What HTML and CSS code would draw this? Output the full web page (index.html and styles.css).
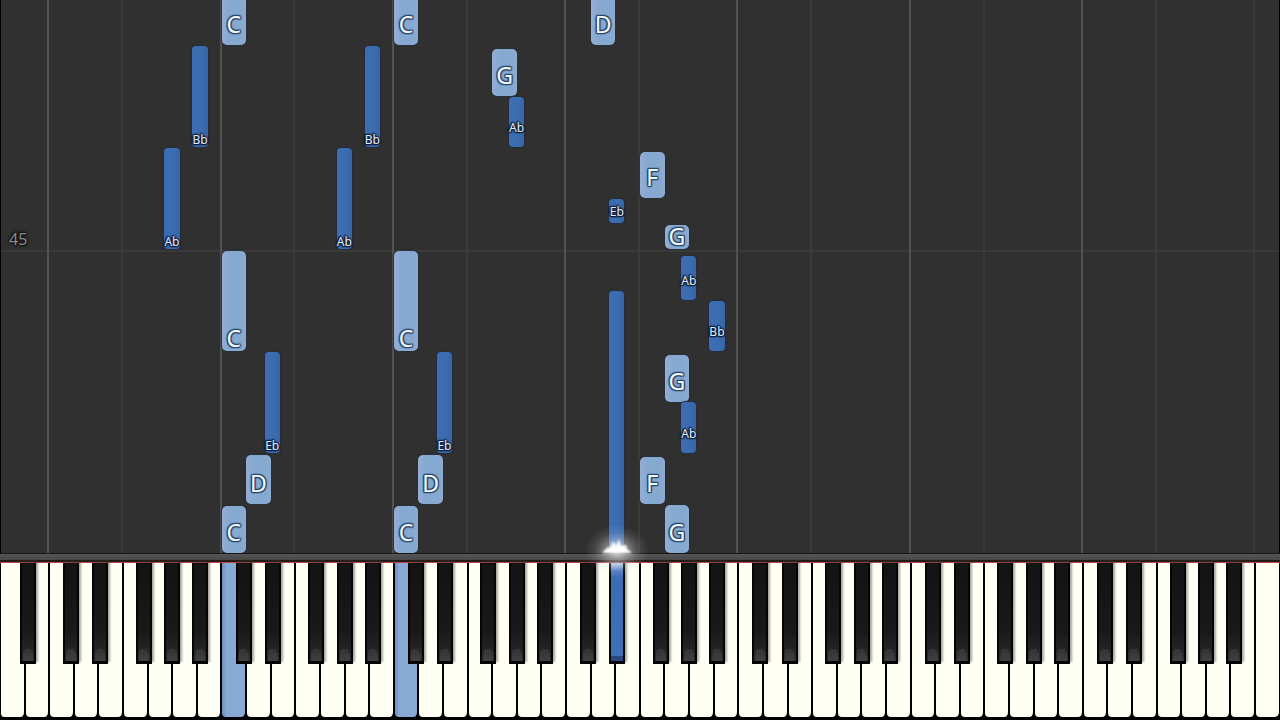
FILE: index.html
```html
<!DOCTYPE html>
<html lang="en">
<head>
<meta charset="utf-8">
<meta name="viewport" content="width=device-width, initial-scale=1">
<title>Piano roll</title>
<link rel="stylesheet" href="styles.css">
</head>
<body>
<main class="stage">
  <section class="roll" id="roll" aria-label="Falling notes">
    <div class="measure"><span class="measure-number">45</span></div>
  </section>
  <div class="rail"></div>
  <section class="keyboard" id="keyboard" aria-label="Piano keyboard">
    <div class="white-keys" id="white-keys"></div>
  </section>
</main>
<script src="script.js"></script>
</body>
</html>
```

FILE: styles.css
```css
* {
  box-sizing: border-box;
}

body {
  margin: 0;
  background: #000;
  font-family: "Noto Sans", "Open Sans", sans-serif;
}

.stage {
  display: flex;
  flex-direction: column;
  height: 100vh;
  overflow: hidden;
}

.roll {
  position: relative;
  flex: 1;
  overflow: hidden;
  background: #303030;
  box-shadow: inset 1px 0 #000, inset -1px 0 #000;
}

.lane-line {
  position: absolute;
  top: 0;
  bottom: 0;
  width: 2px;
  margin-left: -2px;
  background: #3a3a3a;
}

.lane-line-octave {
  background: #525252;
}

.measure {
  position: absolute;
  left: 1px;
  right: 1px;
  bottom: 301px;
  padding-left: 8px;
  border-bottom: 2px solid #3a3a3a;
}

.measure-number {
  display: block;
  font-size: 16px;
  line-height: 22px;
  color: #8a8a8a;
  text-shadow: 0 0 2px #111, 1px 1px 2px #111, -1px -1px 2px #111, 0 0 3px #111;
}

.note {
  position: absolute;
  display: flex;
  align-items: flex-end;
  justify-content: center;
  border-radius: 5px;
}

.note-white {
  width: 1.92%;
  background: linear-gradient(90deg, #97add3, #86a9d1 30%, #86a9d1 80%, #8fabd0);
  box-shadow: 0 0 1px 1px #2a3038;
}

.note-black {
  width: 1.18%;
  border-radius: 4px;
  background: linear-gradient(90deg, #3d6eb5, #3b6caf 60%, #3766a8);
  box-shadow: 0 0 1px 1px #262d3a;
}

.note-label {
  color: #f4f8fc;
}

.note-white .note-label {
  font-size: 23px;
  line-height: 26px;
  text-shadow: 1px 0 1px #29496c, -1px 0 1px #29496c, 0 1px 1px #29496c, 0 -1px 1px #29496c, 1px 1px 1px #29496c, -1px -1px 1px #29496c, 1px -1px 1px #29496c, -1px 1px 1px #29496c;
}

.note-black .note-label {
  font-size: 12px;
  line-height: 14px;
  color: #e4edf8;
  text-shadow: 1px 0 1px #10213f, -1px 0 1px #10213f, 0 1px 1px #10213f, 0 -1px 1px #10213f, 1px 1px 1px #10213f, -1px -1px 1px #10213f, 0 0 3px #10213f, -1px 1px 1px #10213f;
}

.note-lifted {
  padding-bottom: 8px;
}

.note-black.note-lifted {
  padding-bottom: 12px;
}

.note-tight {
  padding-bottom: 4px;
}

.rail {
  height: 9px;
  background: linear-gradient(#565656, #474747);
  border-top: 1px solid #161616;
  border-bottom: 2px solid #241a18;
}

.keyboard {
  position: relative;
  height: 158px;
  padding-bottom: 3px;
  background: #000;
}

.white-keys {
  display: flex;
  height: 100%;
  border-top: 1px solid #b8474b;
}

.key {
  display: block;
  padding: 0;
  border: 0;
  font: inherit;
}

.key-white {
  flex: 1;
  min-width: 0;
  border-right: 2px solid #000;
  border-radius: 0 0 5px 4px;
  background: #fffff3;
}

.key-white:first-child {
  border-left: 1px solid #000;
}

.key-white:last-child {
  border-right-width: 1px;
}

.key-white.key-pressed {
  background: linear-gradient(90deg, #6d8fbd, #87a9d3 20%, #87a9d3);
}

.key-black {
  position: absolute;
  top: 1px;
  width: 1.25%;
  height: 101px;
  border: solid #050505;
  border-width: 0 2px 3px;
  background: linear-gradient(#131313, #191919 70%, #262626 92%, #303030);
  box-shadow: 2px -2px 2px rgba(60, 55, 50, 0.45);
}

.key-black::after {
  content: "";
  display: block;
  height: 12px;
  margin: 86px 1px 0;
  background: linear-gradient(#333, #404040);
  clip-path: polygon(0 25%, 20% 0, 80% 0, 80% 20%, 100% 35%, 100% 100%, 0 100%);
}

.key-black.key-pressed {
  background: linear-gradient(#b9cdec, #4a79bf 8px, #3b6db4 16px, #3e70b8 93px, #2b4681 93px);
}

.key-black.key-pressed::after {
  display: none;
}

.spark {
  position: absolute;
  top: -52px;
  width: 80px;
  height: 80px;
  margin-left: -40px;
  pointer-events: none;
}
```

FILE: script.js
```js
const WHITE_COUNT = 52;
const HIT_LINE = 553;
const STEPS = { C: 0, D: 1, E: 2, F: 3, G: 4, A: 5, B: 6 };
// Left edge of each black key, in white-key widths from the octave's C.
const BLACK = { Db: 0.57, Eb: 1.75, Gb: 3.52, Ab: 4.68, Bb: 5.82 };

// [name, octave, top, bottom, label placement]; top and bottom in roll units.
const NOTES = [
  ["C", 2, -10, 45, "lifted"], ["Bb", 1, 46, 147, ""], ["Ab", 1, 148, 249, ""],
  ["C", 2, 251, 351, ""], ["Eb", 2, 352, 453, ""], ["D", 2, 455, 504, "lifted"], ["C", 2, 506, 553, "lifted"],
  ["C", 3, -10, 45, "lifted"], ["Bb", 2, 46, 147, ""], ["Ab", 2, 148, 249, ""],
  ["C", 3, 251, 351, ""], ["Eb", 3, 352, 453, ""], ["D", 3, 455, 504, "lifted"], ["C", 3, 506, 553, "lifted"],
  ["G", 3, 49, 96, "lifted"], ["Ab", 3, 97, 147, "lifted"], ["D", 4, -10, 45, "lifted"],
  ["F", 4, 152, 198, "lifted"], ["Eb", 4, 199, 223, "tight"], ["G", 4, 225, 249, ""],
  ["Ab", 4, 256, 300, "lifted"], ["Bb", 4, 301, 351, "lifted"], ["G", 4, 355, 402, "lifted"],
  ["Ab", 4, 402, 453, "lifted"], ["F", 4, 457, 504, "lifted"], ["G", 4, 505, 553, "lifted"],
  ["Eb", 4, 291, 557, "none"]
];
const PRESSED = ["C2", "C3", "Eb4"];

const roll = document.getElementById("roll");
const keyboard = document.getElementById("keyboard");
const whiteKeys = document.getElementById("white-keys");

const octaveStart = octave => octave * 7 - 5;
const percent = units => `${(units / WHITE_COUNT * 100).toFixed(3)}%`;

function add(parent, tag, className, style) {
  const node = document.createElement(tag);
  node.className = className;
  Object.assign(node.style, style || {});
  parent.append(node);
  return node;
}

function addKey(parent, name, kind, style) {
  const pressed = PRESSED.includes(name);
  const key = add(parent, "button", `key key-${kind}${pressed ? " key-pressed" : ""}`, style);
  key.type = "button";
  key.setAttribute("aria-label", name);
  key.setAttribute("aria-pressed", String(pressed));
}

for (let octave = 0; octave <= 8; octave++) {
  for (const [name, step] of Object.entries(STEPS)) {
    const index = octaveStart(octave) + step;
    if (index < 0 || index >= WHITE_COUNT) continue;
    addKey(whiteKeys, name + octave, "white");
    if (name === "C" || name === "F") {
      const bright = name === "C" && octave < 8;
      add(roll, "div", `lane-line${bright ? " lane-line-octave" : ""}`, { left: percent(index) });
    }
  }
  for (const [name, offset] of Object.entries(BLACK)) {
    const left = octaveStart(octave) + offset;
    if (left < 0 || left > WHITE_COUNT - 1) continue;
    addKey(keyboard, name + octave, "black", { left: percent(left) });
  }
}

for (const [name, octave, top, bottom, placement] of NOTES) {
  const black = name in BLACK;
  const left = octaveStart(octave) + (black ? BLACK[name] : STEPS[name]);
  const note = add(roll, "div", `note note-${black ? "black" : "white"} note-${placement || "plain"}`, {
    left: percent(left),
    bottom: `${HIT_LINE - bottom}px`,
    height: `${bottom - top}px`
  });
  if (placement !== "none") add(note, "span", "note-label").textContent = name;
}

const spark = add(keyboard, "div", "spark", { left: percent(octaveStart(4) + BLACK.Eb + 0.3) });
spark.innerHTML = `<svg width="80" height="80" viewBox="0 0 80 80" aria-hidden="true">
  <defs>
    <radialGradient id="halo"><stop offset="0" stop-color="#fff" stop-opacity=".8"/><stop offset=".35" stop-color="#eee" stop-opacity=".42"/><stop offset=".7" stop-color="#ddd" stop-opacity=".13"/><stop offset="1" stop-color="#ccc" stop-opacity="0"/></radialGradient>
    <filter id="soft" x="-30%" y="-30%" width="160%" height="160%"><feGaussianBlur stdDeviation="1.2"/></filter>
  </defs>
  <ellipse cx="40" cy="41" rx="32" ry="26" fill="url(#halo)"/>
  <path d="M25 43 L30 38 L34 37 L36 31 L39 36 L42 29 L44 36 L49 35 L50 39 L55 43 Z" fill="#fff" filter="url(#soft)"/>
</svg>`;
```
